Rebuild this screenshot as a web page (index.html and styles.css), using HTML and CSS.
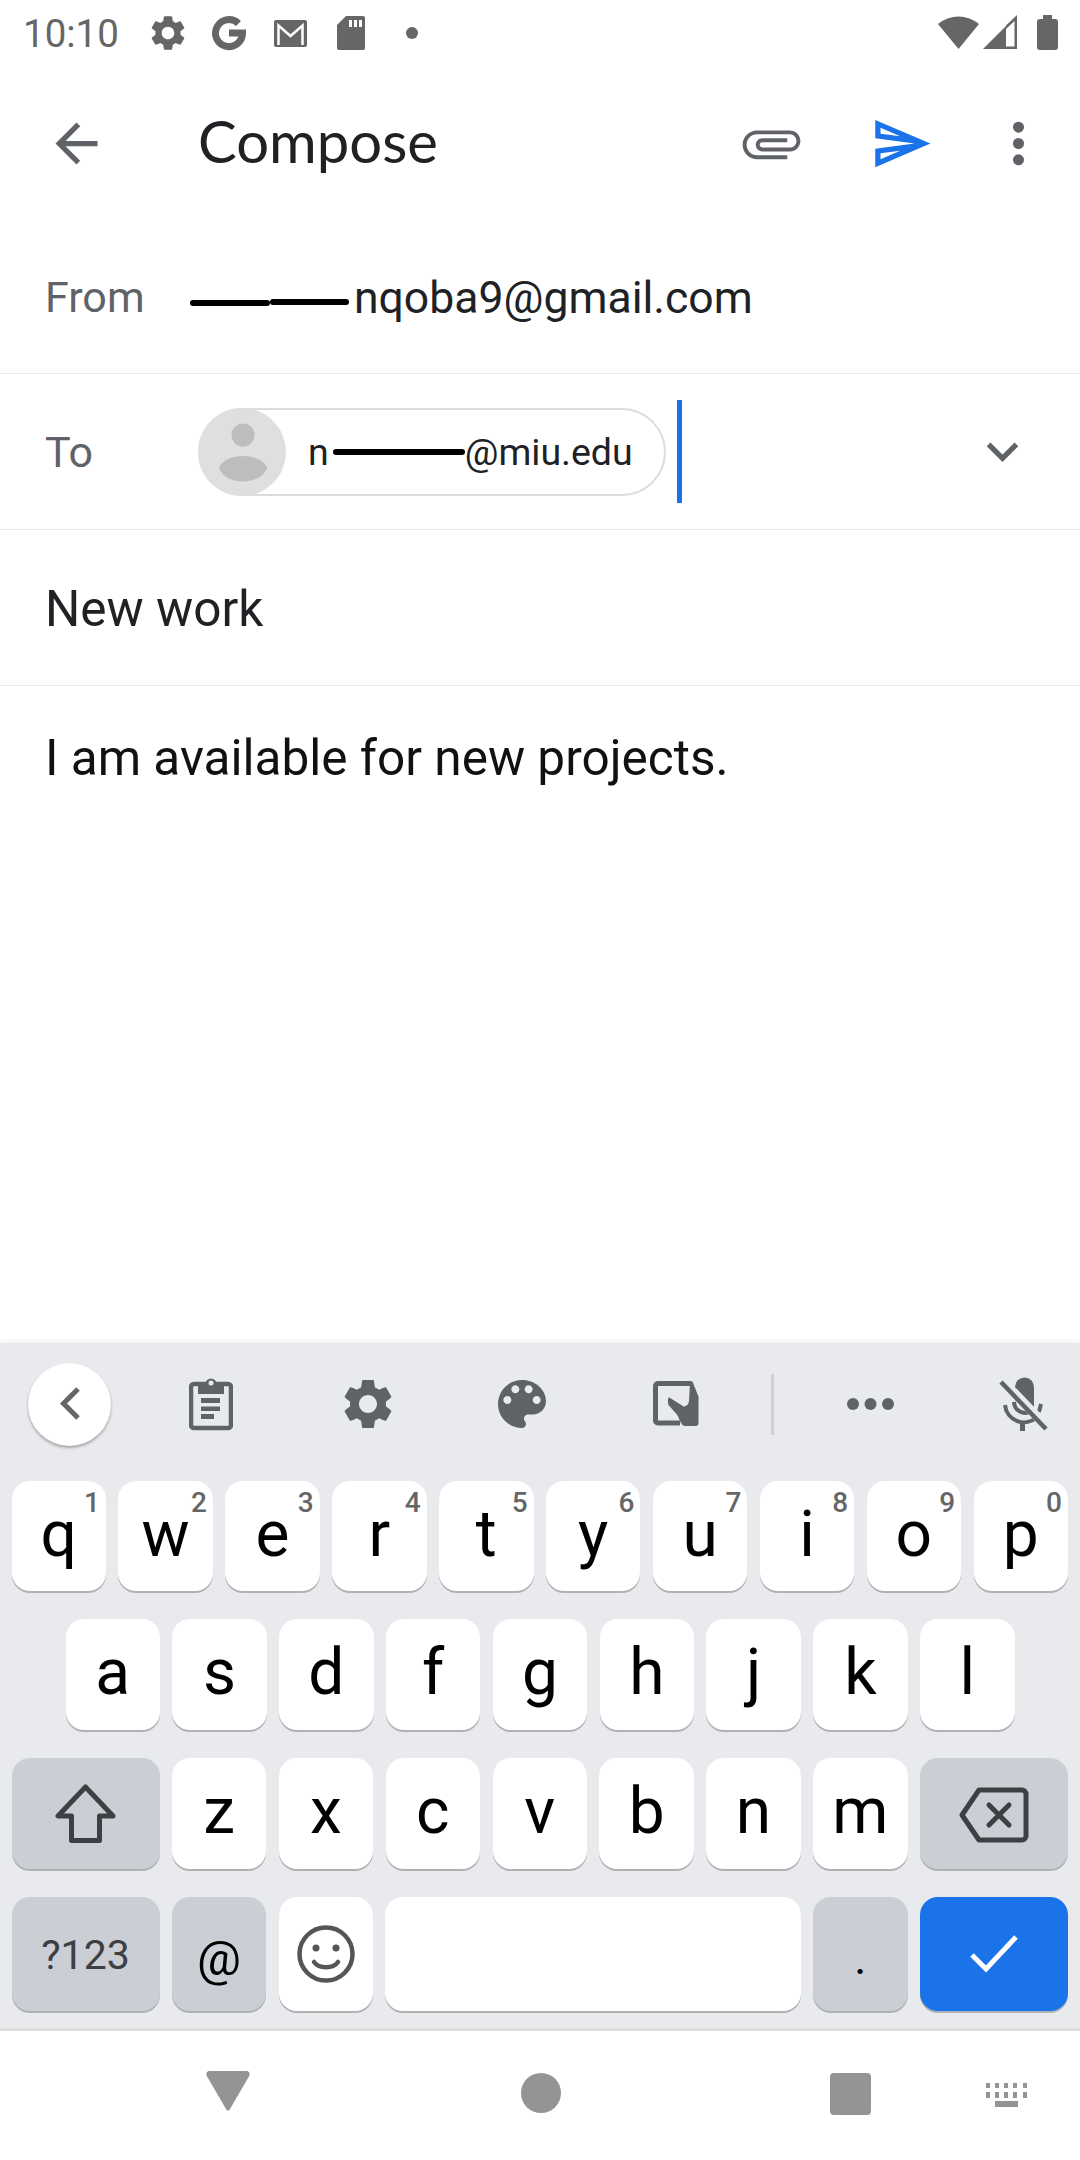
FILE: index.html
```html
<!DOCTYPE html>
<html lang="en">
<head>
  <meta charset="UTF-8">
  <title>Compose</title>
  <link rel="stylesheet" href="styles.css">
</head>
<body>
  <svg class="defs" width="0" height="0">
    <symbol id="gear" viewBox="0 0 24 24"><path d="M19.14,12.94c0.04-0.3,0.06-0.61,0.06-0.94c0-0.32-0.02-0.64-0.07-0.94l2.03-1.58c0.18-0.14,0.23-0.41,0.12-0.61 l-1.92-3.32c-0.12-0.22-0.37-0.29-0.59-0.22l-2.39,0.96c-0.5-0.38-1.03-0.7-1.62-0.94L14.4,2.81c-0.04-0.24-0.24-0.41-0.48-0.41 h-3.84c-0.24,0-0.43,0.17-0.47,0.41L9.25,5.35C8.66,5.59,8.12,5.92,7.63,6.29L5.24,5.33c-0.22-0.08-0.47,0-0.59,0.22L2.74,8.87 C2.62,9.08,2.66,9.34,2.86,9.48l2.03,1.58C4.84,11.36,4.8,11.69,4.8,12s0.02,0.64,0.07,0.94l-2.03,1.58 c-0.18,0.14-0.23,0.41-0.12,0.61l1.92,3.32c0.12,0.22,0.37,0.29,0.59,0.22l2.39-0.96c0.5,0.38,1.03,0.7,1.62,0.94l0.36,2.54 c0.05,0.24,0.24,0.41,0.48,0.41h3.84c0.24,0,0.44-0.17,0.47-0.41l0.36-2.54c0.59-0.24,1.13-0.56,1.62-0.94l2.39,0.96 c0.22,0.08,0.47,0,0.59-0.22l1.92-3.32c0.12-0.22,0.07-0.47-0.12-0.61L19.14,12.94z M12,15.6c-1.98,0-3.6-1.62-3.6-3.6 s1.62-3.6,3.6-3.6s3.6,1.62,3.6,3.6S13.98,15.6,12,15.6z"/></symbol>
  </svg>

  <div class="status">
    <span class="clock">10:10</span>
    <svg class="status-left" width="280" height="66" viewBox="0 0 280 66" fill="#666">
      <use href="#gear" x="0" y="12" width="42" height="42"/>
      <path d="M91.500 23.500 A13.500 13.500 0 1 0 95.500 33 H82" fill="none" stroke="#666" stroke-width="7"/>
      <rect x="127" y="20" width="33" height="27" rx="2"/>
      <path d="M131.500 45V25.500L143.500 36L155.500 25.500V45" fill="none" stroke="#fff" stroke-width="2.500"/>
      <path d="M199 16H216a2 2 0 0 1 2 2V48a2 2 0 0 1-2 2H192a2 2 0 0 1-2-2V25z"/>
      <path d="M202 20h3v7h-3zM207 20h3v7h-3zM212 20h3v7h-3z" fill="#fff"/>
      <circle cx="265" cy="33" r="6"/>
    </svg>
    <svg class="status-right" width="124" height="66" viewBox="0 0 124 66" fill="#666">
      <path d="M4 24 A32 32 0 0 1 45 24 L24.500 49z"/>
      <path d="M49 49 L72 26 V49z"/>
      <path d="M72 25.500 L83 15 V49 H72 V46.500 H80.500 V21 L72 29z"/>
      <path d="M109 15h9v4h3a3 3 0 0 1 3 3V47a3 3 0 0 1-3 3H106a3 3 0 0 1-3-3V22a3 3 0 0 1 3-3h3z"/>
    </svg>
  </div>

  <div class="appbar">
    <svg class="back" width="63" height="63" viewBox="0 0 24 24" fill="#5f6368"><path d="M20 11H7.830l5.590-5.590L12 4l-8 8 8 8 1.410-1.410L7.830 13H20v-2z"/></svg>
    <span class="title">Compose</span>
    <svg class="attach" width="63" height="63" viewBox="0 0 24 24" fill="#5f6368"><path transform="rotate(90 12 12)" d="M16.500 6v11.500c0 2.210-1.790 4-4 4s-4-1.790-4-4V5c0-1.380 1.120-2.500 2.500-2.500s2.500 1.120 2.500 2.500v10.500c0 .55-.45 1-1 1s-1-.45-1-1V6H10v9.500c0 1.380 1.120 2.500 2.500 2.500s2.500-1.120 2.500-2.500V5c0-2.210-1.790-4-4-4S7 2.790 7 5v12.500c0 3.040 2.460 5.500 5.500 5.500s5.500-2.460 5.500-5.500V6h-1.500z"/></svg>
    <svg class="send" width="63" height="63" viewBox="0 0 24 24" fill="#1a73e8"><path d="M4.010 6.030l7.510 3.220-7.520-1 .01-2.220m7.500 8.720L4 17.970v-2.220l7.510-1M2.010 3L2 10l15 2-15 2 .01 7L23 12 2.010 3z"/></svg>
    <svg class="more" width="63" height="63" viewBox="0 0 24 24" fill="#5f6368"><circle cx="12" cy="5.800" r="2.100"/><circle cx="12" cy="12" r="2.100"/><circle cx="12" cy="18.200" r="2.100"/></svg>
  </div>

  <div class="field">
    <span class="label from">From</span>
    <span class="redact first"></span><span class="redact second"></span>
    <span class="value">nqoba9@gmail.com</span>
  </div>

  <div class="field">
    <span class="label">To</span>
    <div class="chip">
      <svg class="avatar" width="88" height="88" viewBox="0 0 88 88"><circle cx="44" cy="44" r="44" fill="#dfdfdf"/><ellipse cx="45" cy="27" rx="11.500" ry="11.500" fill="#bdbdbd"/><path d="M21 60C27 44 63 44 69 60C62 78 28 78 21 60z" fill="#bdbdbd"/></svg>
      <span class="chip-text">n</span>
      <span class="redact chip-line"></span>
      <span class="chip-text">@miu.edu</span>
    </div>
    <span class="cursor"></span>
    <svg class="expand" width="63" height="63" viewBox="0 0 24 24" fill="#5f6368"><path d="M16.590 8.590L12 13.170 7.410 8.590 6 10l6 6 6-6z"/></svg>
  </div>

  <div class="field subject"><span>New work</span></div>
  <div class="body-text">I am available for new projects.</div>

  <div class="keyboard">
    <div class="tools">
      <div class="tool first-tool">
        <div class="collapse">
          <svg width="40" height="40" viewBox="0 0 40 40" fill="none" stroke="#666" stroke-width="5"><path d="M28 5L13.500 19.500L28 34"/></svg>
        </div>
      </div>
      <div class="tool clip-tool">
        <svg width="44" height="54" viewBox="0 0 44 54">
          <rect x="2" y="7" width="40" height="44" rx="3" fill="none" stroke="#5f6368" stroke-width="4.500"/>
          <path d="M9 7h7.500a5.500 5.500 0 0 1 11 0H33a2 2 0 0 1 2 2v8H9z" fill="#5f6368"/>
          <circle cx="22" cy="6" r="2.500" fill="#e8eaed"/>
          <path d="M12 21h19v5H12zM12 29.500h19v4.500H12zM12 37h13v5H12z" fill="#5f6368"/>
        </svg>
      </div>
      <div class="tool gear-tool"><svg width="60" height="60" fill="#5f6368"><use href="#gear"/></svg></div>
      <div class="tool palette-tool">
        <svg width="64" height="64" viewBox="0 0 24 24" fill="#5f6368"><path d="M12 3c-4.970 0-9 4.030-9 9s4.030 9 9 9c.83 0 1.500-.67 1.500-1.500 0-.39-.15-.74-.39-1.010-.24-.27-.39-.62-.39-1.010 0-.83.67-1.500 1.500-1.500H16c2.760 0 5-2.240 5-5 0-4.420-4.030-8-9-8zm-5.500 9c-.83 0-1.500-.67-1.500-1.500S5.670 9 6.500 9 8 9.670 8 10.500 7.330 12 6.500 12zm3-4C8.670 8 8 7.330 8 6.500S8.670 5 9.500 5s1.500.67 1.500 1.500S10.330 8 9.500 8zm5 0c-.83 0-1.500-.67-1.500-1.500S13.670 5 14.500 5s1.500.67 1.500 1.500S15.330 8 14.500 8zm3 4c-.83 0-1.500-.67-1.500-1.500S16.670 9 17.500 9s1.500.67 1.500 1.500-.67 1.500-1.500 1.500z"/></svg>
      </div>
      <div class="tool theme-tool">
        <svg width="46" height="47" viewBox="0 0 46 47">
          <path d="M38 2.500H5a2.500 2.500 0 0 0-2.500 2.500V39.500a2.500 2.500 0 0 0 2.500 2.500H27" fill="none" stroke="#5f6368" stroke-width="5"/>
          <path d="M37 .5H39.500L45.500 15.700V42a3 3 0 0 1-3 3H33C28 45.500 27 39 24.300 34L15.500 24C14.500 20 15 17 16 16.300L31 25.700C33 25 35.500 24 36 20z" fill="#5f6368"/>
        </svg>
      </div>
      <div class="tool-divider"></div>
      <div class="tool more-tool">
        <svg width="47" height="12" viewBox="0 0 47 12" fill="#5f6368"><circle cx="6" cy="6" r="6"/><circle cx="23.500" cy="6" r="6"/><circle cx="41" cy="6" r="6"/></svg>
      </div>
      <div class="tool mic-tool">
        <svg width="50" height="54" viewBox="0 0 50 54" fill="#5f6368">
          <path d="M16 24V10a9.500 9.500 0 0 1 19 0V30z"/>
          <path d="M6 28a19 19 0 0 0 32 12" fill="none" stroke="#5f6368" stroke-width="4"/>
          <path d="M15 25a11 11 0 0 0 17 9" fill="none" stroke="#5f6368" stroke-width="4"/>
          <path d="M42 27l-2 8" fill="none" stroke="#5f6368" stroke-width="4"/>
          <path d="M21 45h5v9h-5z"/>
          <path d="M2 5L47 52" stroke="#e8eaed" stroke-width="9" fill="none" transform="translate(2 -1)"/>
          <path d="M2 5L47 52" stroke="#5f6368" stroke-width="4.500" fill="none"/>
        </svg>
      </div>
    </div>

    <div class="keys">
      <div class="row row-ten">
        <div class="key">q<span class="hint">1</span></div>
        <div class="key">w<span class="hint">2</span></div>
        <div class="key">e<span class="hint">3</span></div>
        <div class="key">r<span class="hint">4</span></div>
        <div class="key">t<span class="hint">5</span></div>
        <div class="key">y<span class="hint">6</span></div>
        <div class="key">u<span class="hint">7</span></div>
        <div class="key">i<span class="hint">8</span></div>
        <div class="key">o<span class="hint">9</span></div>
        <div class="key">p<span class="hint">0</span></div>
      </div>
      <div class="row row-nine">
        <div class="key">a</div>
        <div class="key">s</div>
        <div class="key">d</div>
        <div class="key">f</div>
        <div class="key">g</div>
        <div class="key">h</div>
        <div class="key">j</div>
        <div class="key">k</div>
        <div class="key">l</div>
      </div>
      <div class="row row-shift">
        <div class="key mod icon-key">
          <svg width="61" height="59" viewBox="0 0 61 59" fill="none" stroke="#3c4043" stroke-width="5" stroke-linejoin="round"><path d="M30.500 3L3 32H16.500V56.500H44.500V32H58z"/></svg>
        </div>
        <div class="key">z</div>
        <div class="key">x</div>
        <div class="key">c</div>
        <div class="key">v</div>
        <div class="key">b</div>
        <div class="key">n</div>
        <div class="key">m</div>
        <div class="key mod icon-key">
          <svg class="del-icon" width="70" height="56" viewBox="0 0 70 56" fill="none" stroke="#3c4043" stroke-width="5" stroke-linejoin="round" stroke-linecap="round"><path d="M20 3H63a4 4 0 0 1 4 4V49a4 4 0 0 1-4 4H20L3 28z"/><path d="M30 18L50 38M50 18L30 38"/></svg>
        </div>
      </div>
      <div class="row row-bottom">
        <div class="key mod sym">?123</div>
        <div class="key mod at">@</div>
        <div class="key icon-key">
          <svg width="58" height="58" viewBox="0 0 58 58" fill="none" stroke="#555" stroke-width="4.500" stroke-linecap="round"><circle cx="29" cy="29" r="26.500"/><circle cx="19" cy="23" r="3.500" fill="#555" stroke="none"/><circle cx="39" cy="23" r="3.500" fill="#555" stroke="none"/><path d="M17 37C22 44 36 44 41 37"/></svg>
        </div>
        <div class="key"></div>
        <div class="key mod dot-key">.</div>
        <div class="key enter icon-key">
          <svg width="50" height="40" viewBox="0 0 50 40" fill="none" stroke="#fff" stroke-width="5"><path d="M3 21L17 35L47 3"/></svg>
        </div>
      </div>
    </div>
  </div>

  <div class="nav">
    <svg class="nav-back" width="44" height="40" viewBox="0 0 44 40" fill="#949494"><path d="M4 0H40C43 0 44 2 43.500 4.500L24 38C23 40 21 40 20 38L.5 4.500C0 2 1 0 4 0z"/></svg>
    <span class="nav-home"></span>
    <span class="nav-recent"></span>
    <svg class="nav-kbd" width="42" height="24" viewBox="0 0 42 24" fill="#949494"><path d="M0 0h4v5H0zM9 0h4v5H9zM18 0h4v5h-4zM27 0h4v5h-4zM37 0h4v5h-4zM0 9h4v6H0zM9 9h4v6H9zM18 9h4v6h-4zM27 9h4v6h-4zM37 9h4v6h-4zM9 18h23v6H9z"/></svg>
  </div>
</body>
</html>
```

FILE: styles.css
```css
html, body {
  margin: 0;
  padding: 0;
  background: #fff;
  height: 2160px;
  overflow: hidden;
}

body {
  display: flex;
  flex-direction: column;
  font-family: Roboto, sans-serif;
  color: #202124;
}

.defs {
  position: absolute;
}

svg {
  display: block;
  flex: none;
}

.status {
  height: 66px;
  flex: none;
  display: flex;
  align-items: center;
}

.clock {
  margin-left: 23px;
  width: 103px;
  font-size: 38.500px;
  color: #666;
  margin-top: 1px;
}

.status-left {
  margin-left: 21px;
  margin-right: auto;
}

.status-right {
  margin-right: 22px;
}

.appbar {
  height: 152px;
  flex: none;
  display: flex;
  align-items: flex-start;
  padding-top: 46px;
  box-sizing: border-box;
}

.back {
  margin-left: 45px;
}

.title {
  margin-left: 90px;
  width: 542px;
  margin-top: -3px;
  font-family: Lato, sans-serif;
  font-size: 58px;
  line-height: 63px;
}

.send {
  margin-left: 67px;
}

.more {
  margin-left: 54px;
}

.field {
  height: 155px;
  border-bottom: 1px solid #e8eaed;
  display: flex;
  align-items: center;
  padding-left: 45px;
  flex: none;
}

.label {
  width: 145px;
  font-size: 43px;
  color: #5f6368;
}

.label.from {
  margin-top: 3px;
}

.redact {
  display: block;
  height: 6px;
  background: #000;
  border-radius: 3px;
}

.redact.first {
  width: 80px;
  margin-top: 15px;
}

.redact.second {
  width: 79px;
  margin-top: 12px;
  margin-right: 5px;
}

.value {
  font-size: 44.500px;
  margin-top: 5px;
}

.chip {
  display: flex;
  align-items: center;
  width: 468px;
  height: 88px;
  margin-left: 8px;
  box-sizing: border-box;
  border: 2px solid #dadce0;
  border-radius: 44px;
  position: relative;
  padding-left: 108px;
}

.avatar {
  position: absolute;
  left: -2px;
  top: -2px;
}

.chip-text {
  font-size: 37.500px;
}

.chip-line {
  width: 132px;
  margin: 0 0 0 4px;
}

.cursor {
  width: 5px;
  height: 103px;
  margin-left: 11px;
  background: #1a73e8;
}

.expand {
  margin-left: 289px;
}

.subject {
  font-size: 49.500px;
}

.subject span {
  margin-top: 2px;
}

.body-text {
  flex: 1;
  padding: 43px 45px 0;
  font-size: 49.500px;
  color: #111;
}

.keyboard {
  flex: none;
  background: #e8eaed;
  border-bottom: 3px solid #dfdfdf;
  box-shadow: 0 -2px 4px rgba(0, 0, 0, 0.06);
  position: relative;
}

.tools {
  height: 122px;
  display: flex;
  align-items: center;
}

.tool {
  display: flex;
  align-items: center;
  justify-content: center;
}

.first-tool { width: 139px; }
.clip-tool { width: 144px; }
.gear-tool { width: 169px; }
.palette-tool { width: 140px; }
.theme-tool { width: 168px; }
.more-tool { width: 172px; }
.mic-tool { width: 112px; margin-left: 12px; }

.collapse {
  width: 83px;
  height: 83px;
  border-radius: 50%;
  background: #fff;
  box-shadow: 0 2px 3px rgba(0, 0, 0, 0.3);
  display: flex;
  align-items: center;
  justify-content: center;
}

.tool-divider {
  width: 3px;
  height: 61px;
  margin: 0 10px 0 11px;
  background: #ced0d4;
}

.keys {
  display: grid;
  grid-template-rows: 110px 111px 111px 114px;
  row-gap: 28px;
  padding: 16px 12px 17px 11.500px;
}

.row {
  display: grid;
  column-gap: 12.4px;
}

.row-ten { grid-template-columns: repeat(10, 1fr); }
.row-nine { grid-template-columns: repeat(9, 94.44px); padding-left: 54px; }
.row-shift { grid-template-columns: 148px repeat(7, 1fr) 148px; }
.row-bottom { grid-template-columns: 148px 94.4px 94.4px 1fr 94.4px 148px; }

.key {
  position: relative;
  background: #fff;
  border-radius: 18px;
  box-shadow: 0 2px 0 #b0b1b3;
  display: flex;
  align-items: center;
  justify-content: center;
  box-sizing: border-box;
  padding-bottom: 4px;
  font-size: 64px;
  color: #000;
}

.icon-key {
  padding-bottom: 0;
}

.del-icon {
  margin-top: 2px;
}

.mod {
  background: #cbced5;
}

.sym {
  font-size: 41px;
  color: #3c4043;
  padding-bottom: 0;
  padding-top: 2px;
}

.at {
  font-size: 49px;
  padding-bottom: 0;
  padding-top: 9px;
}

.dot-key {
  font-size: 46px;
  padding-top: 12px;
}

.enter {
  background: #1a73e8;
}

.hint {
  position: absolute;
  right: 6px;
  top: 5px;
  font-size: 28px;
  font-weight: 500;
  color: #666;
}

.nav {
  height: 129px;
  flex: none;
  display: flex;
  align-items: flex-start;
}

.nav-back {
  margin: 40px 0 0 206px;
}

.nav-home {
  width: 40px;
  height: 40px;
  margin: 42px 0 0 271px;
  border-radius: 50%;
  background: #949494;
}

.nav-recent {
  width: 41px;
  height: 42px;
  margin: 42px 0 0 269px;
  border-radius: 4px;
  background: #949494;
}

.nav-kbd {
  margin: 52px 0 0 115px;
}
```
